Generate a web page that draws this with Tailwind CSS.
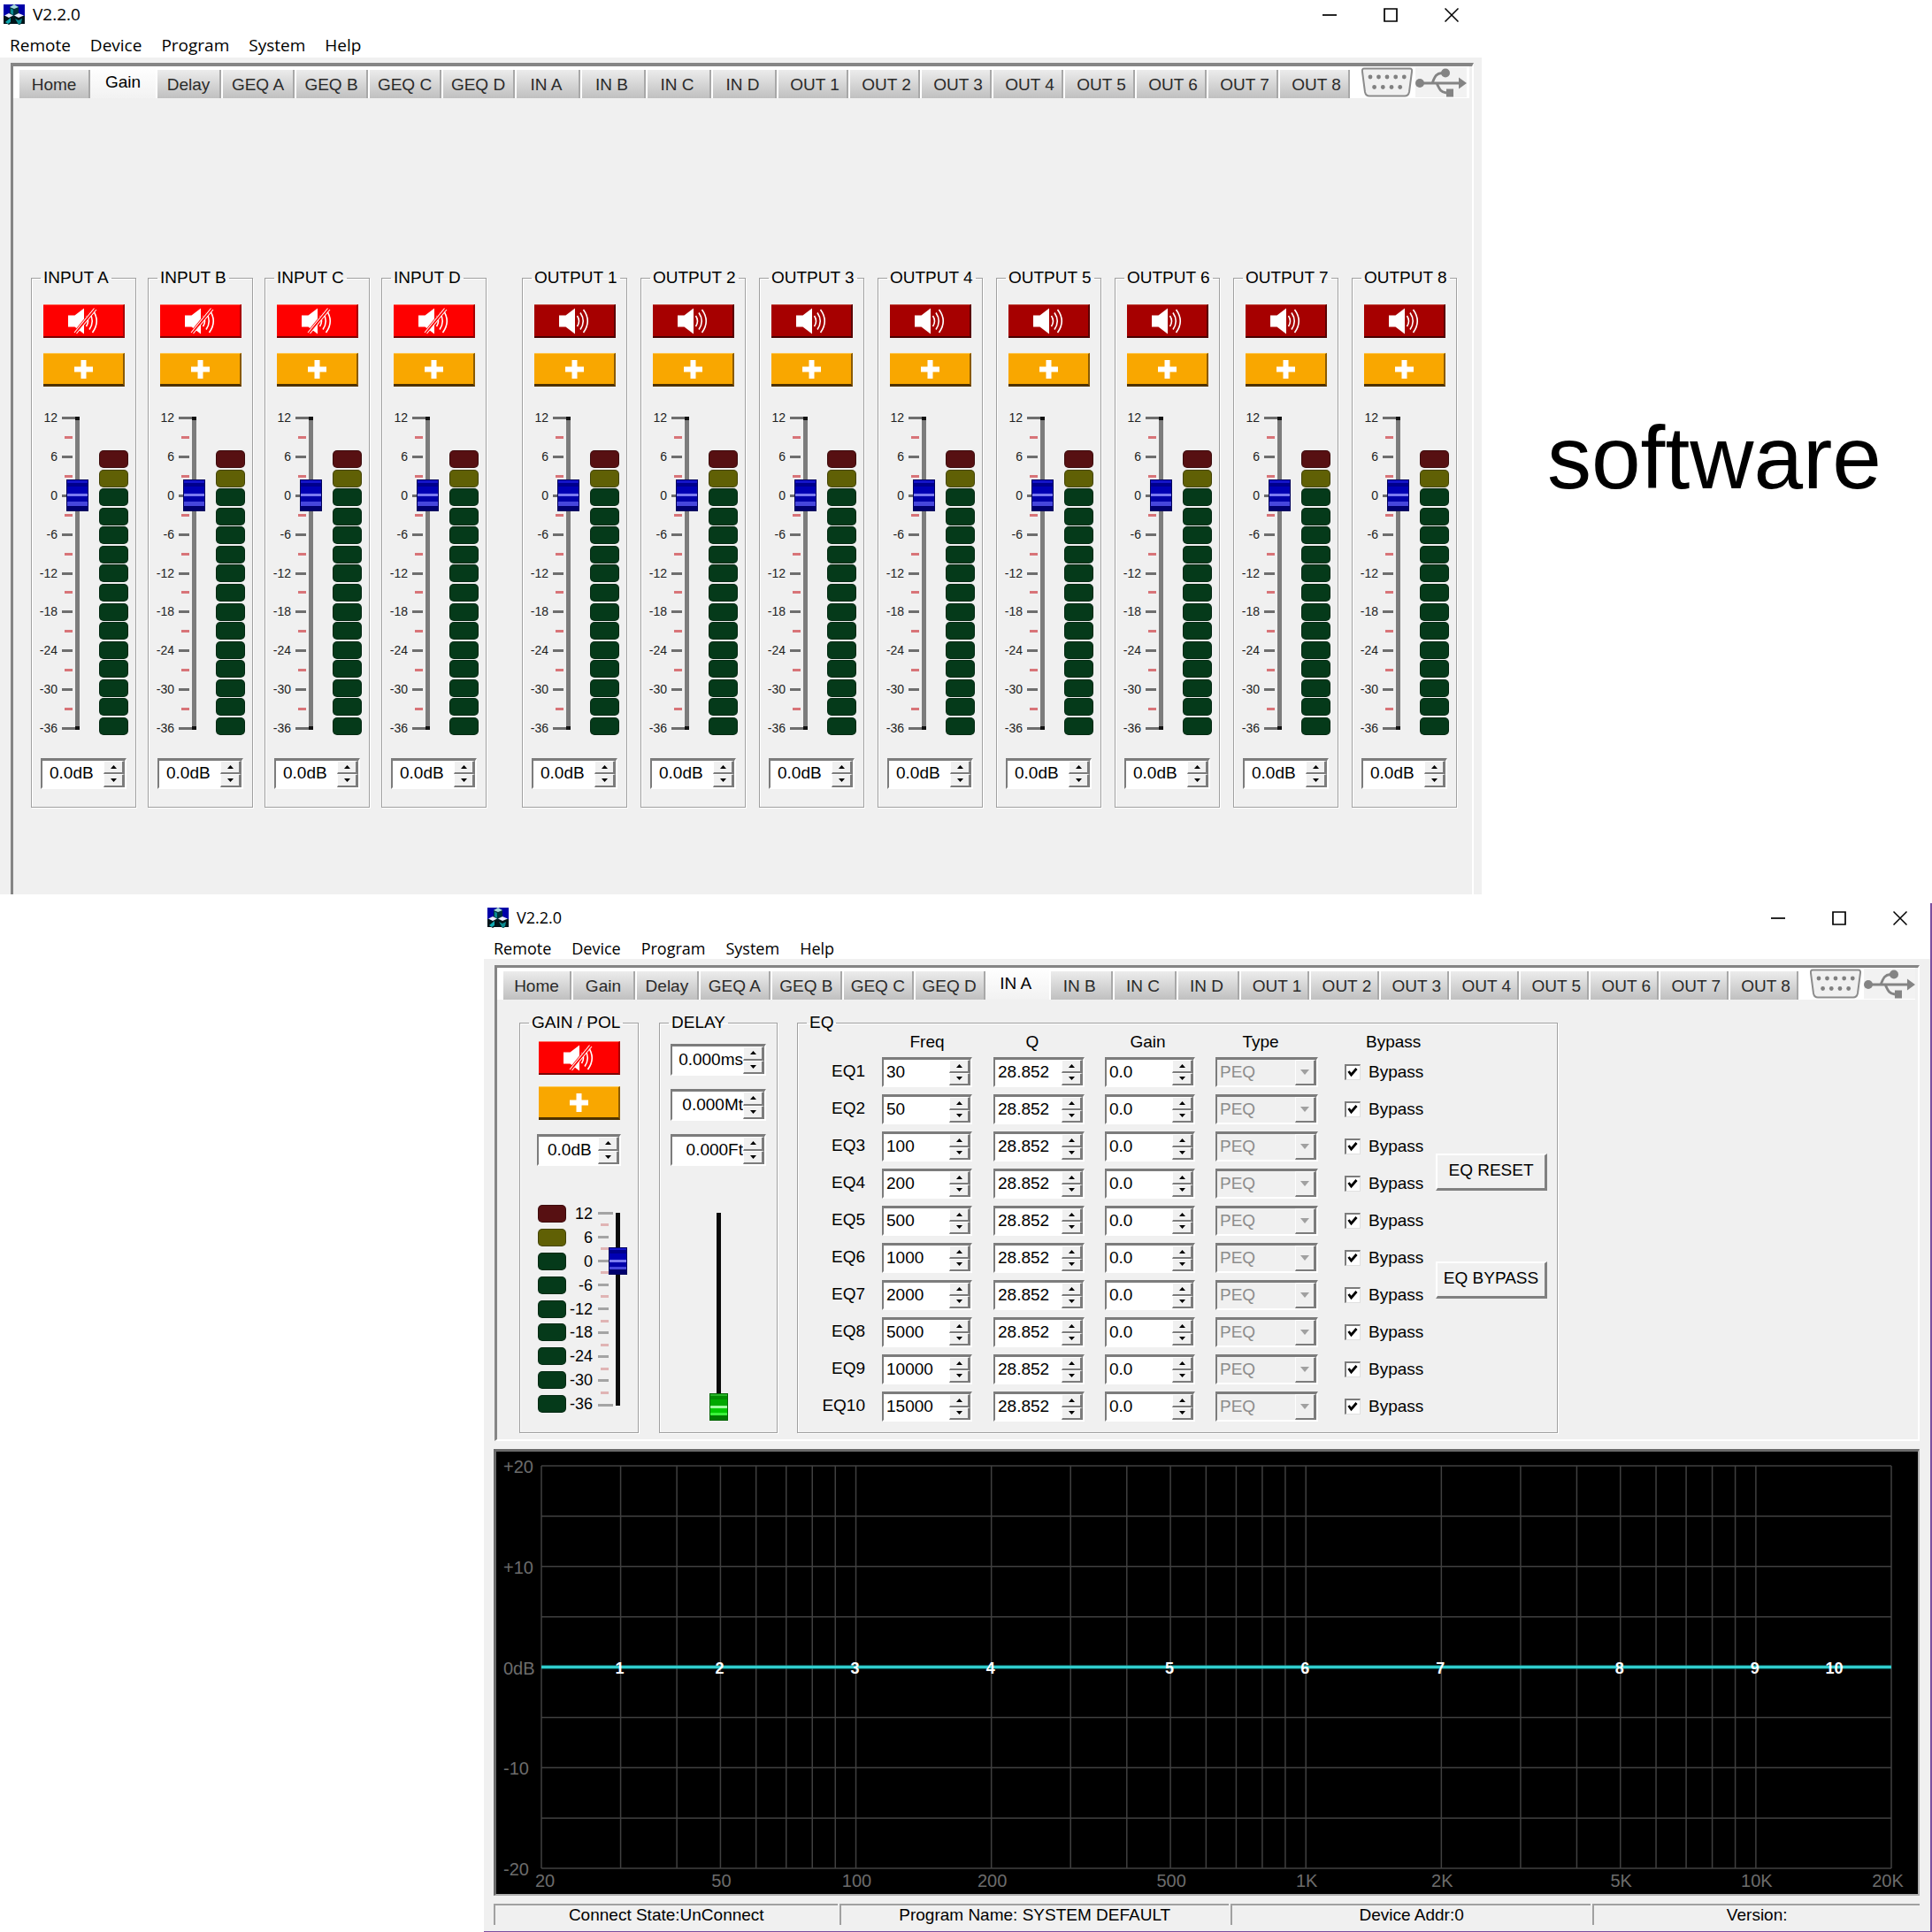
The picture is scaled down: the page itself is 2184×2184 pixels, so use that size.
<!DOCTYPE html>
<html lang="en">
<head>
  <meta charset="UTF-8" />
  <meta name="viewport" content="width=device-width, initial-scale=1.0" />
  <title>V2.2.0</title>
  <script src="https://cdn.jsdelivr.net/npm/@tailwindcss/browser@4"></script>
</head>
<body class="bg-white text-black font-['Liberation_Sans',Arial,sans-serif] text-[19px] leading-6">
  <main class="flex flex-col gap-[10px]">
    <div class="flex">
      <!-- Gain page -->
      <section class="flex-1 min-w-0 bg-[#f0f0f0]">
        <header id="gain-header" class="bg-white h-[65px] font-['Open_Sans','Noto_Sans',sans-serif] text-[19px]"></header>
        <div class="ml-3 mr-[9px] mt-[6px] border-t-4 border-l-[3px] border-r-2 border-t-[#858585] border-l-[#858585] border-r-white">
          <nav id="gain-tabs" class="flex items-end h-9 pl-[5px] mr-[3px] bg-white"></nav>
          <div class="flex gap-10 pt-[191px] pl-5 pb-[98px]">
            <div id="inputs" class="flex gap-[13px]"></div>
            <div id="outputs" class="flex gap-[15px]"></div>
          </div>
        </div>
      </section>
      <h1 class="w-[509px] pl-[74px] pt-[467px] text-[100px] leading-none">software</h1>
    </div>

    <!-- Channel page -->
    <section class="ml-[547px] bg-[#f0f0f0] border-r-2 border-b-2 border-[#7a4fa0] pb-[7px]">
      <header id="channel-header" class="bg-white h-[63px] font-['Open_Sans','Noto_Sans',sans-serif] text-lg"></header>
      <div class="mx-3 mt-[7px] border-t-[3px] border-l-[3px] border-r-2 border-b-2 border-t-[#858585] border-l-[#858585] border-r-white border-b-white">
        <nav id="channel-tabs" class="flex items-end h-9 pl-[5px] mr-[3px] bg-white"></nav>
        <div class="flex pt-[14px] pl-[25px] pb-[7px]">
          <fieldset class="w-[135px] min-w-0 border border-[#a0a0a0] shadow-[inset_1px_1px_0_white,1px_1px_0_white] pb-[22px]">
            <legend class="ml-[10px] px-[3px]">GAIN / POL</legend>
            <div id="channel-gain" class="flex flex-col items-center pt-[9px]"></div>
            <div class="flex items-center h-[235px] mt-[44px] pl-5">
              <div id="channel-leds" class="flex flex-col justify-between h-full"></div>
              <div id="channel-scale" class="flex flex-col justify-between h-full w-[30px] text-right text-lg leading-5"></div>
              <div id="channel-ticks" class="flex flex-col items-start justify-between h-[220px] w-[18px] ml-[6px]"></div>
              <input type="range" aria-label="Channel gain" min="-36" max="12" value="0"
                class="relative appearance-none [writing-mode:vertical-lr] [direction:rtl] w-[21px] h-[249px] -ml-[6px] bg-[linear-gradient(#0a0a0a,#0a0a0a)] bg-[length:5px_218px] bg-center bg-no-repeat [&::-webkit-slider-thumb]:appearance-none [&::-webkit-slider-thumb]:w-[21px] [&::-webkit-slider-thumb]:h-[31px] [&::-webkit-slider-thumb]:border [&::-webkit-slider-thumb]:border-[#00005c] [&::-webkit-slider-thumb]:bg-[linear-gradient(#1414c8_0_8%,#00008c_8%_20%,#0000b4_20%_45%,#7a7af0_45%_54%,#0000a8_54%_72%,#4646dc_72%_84%,#00006e_84%)]" />
            </div>
          </fieldset>

          <fieldset class="w-[134px] min-w-0 ml-[23px] border border-[#a0a0a0] shadow-[inset_1px_1px_0_white,1px_1px_0_white]">
            <legend class="ml-[10px] px-[3px]">DELAY</legend>
            <div id="channel-delay" class="flex flex-col items-center gap-[15px] pt-3"></div>
            <div class="flex justify-center mt-[37px]">
              <input type="range" aria-label="Channel delay" min="0" max="100" value="0"
                class="appearance-none [writing-mode:vertical-lr] [direction:rtl] w-[21px] h-[251px] bg-[linear-gradient(#0a0a0a,#0a0a0a)] bg-[length:5px_220px] bg-center bg-no-repeat [&::-webkit-slider-thumb]:appearance-none [&::-webkit-slider-thumb]:w-[21px] [&::-webkit-slider-thumb]:h-[31px] [&::-webkit-slider-thumb]:border [&::-webkit-slider-thumb]:border-[#006400] [&::-webkit-slider-thumb]:bg-[linear-gradient(#28b428_0_8%,#008c00_8%_20%,#00a800_20%_45%,#a0ffa0_45%_54%,#00c800_54%_72%,#3cf03c_72%_84%,#007800_84%)]" />
            </div>
          </fieldset>

          <fieldset class="w-[860px] min-w-0 ml-[22px] border border-[#a0a0a0] shadow-[inset_1px_1px_0_white,1px_1px_0_white]">
            <legend class="ml-[10px] px-[3px]">EQ</legend>
            <div class="flex">
              <table class="table-fixed w-[721px]">
                <thead>
                  <tr class="h-[27px] align-top leading-5">
                    <td class="w-[77px]"></td>
                    <th class="w-[144px] pl-[18px] pr-6 font-normal text-center">Freq</th>
                    <th class="w-[126px] pr-[38px] font-normal text-center">Q</th>
                    <th class="w-[125px] pr-[28px] font-normal text-center">Gain</th>
                    <th class="w-[146px] pr-[44px] font-normal text-center">Type</th>
                    <th class="w-[103px] pl-6 font-normal text-left">Bypass</th>
                  </tr>
                </thead>
                <tbody id="eq-rows"></tbody>
              </table>
              <div class="flex flex-col gap-20 pt-[136px]">
                <button class="w-[126px] h-[42px] pb-1 text-[19px] whitespace-nowrap border-t-2 border-l-2 border-r-[3px] border-b-[3px] border-t-white border-l-white border-r-[#808080] border-b-[#808080]">EQ RESET</button>
                <button class="w-[126px] h-[42px] pb-1 text-[19px] whitespace-nowrap border-t-2 border-l-2 border-r-[3px] border-b-[3px] border-t-white border-l-white border-r-[#808080] border-b-[#808080]">EQ BYPASS</button>
              </div>
            </div>
          </fieldset>
        </div>
      </div>

      <!-- Response curve -->
      <div class="ml-[11px] mr-3 mt-[9px] h-[505px] bg-black border-t-[3px] border-l-[3px] border-r-2 border-b-2 border-t-[#6a6a6a] border-l-[#6a6a6a] border-r-[#b0b0b0] border-b-[#b0b0b0] pl-[51px] pr-[30px] pt-4 pb-[29px]">
        <svg id="curve" class="w-full h-full overflow-visible text-xl" aria-label="EQ response"></svg>
      </div>

      <footer class="grid grid-cols-[390fr_442fr_409fr_371fr] gap-x-[2px] ml-[11px] mr-3 mt-[9px] text-center leading-[22px] whitespace-nowrap">
        <div class="border-t-2 border-l-2 border-[#a0a0a0]">Connect State:UnConnect</div>
        <div class="border-t-2 border-l-2 border-[#a0a0a0]">Program Name: SYSTEM DEFAULT</div>
        <div class="border-t-2 border-l-2 border-[#a0a0a0]">Device Addr:0</div>
        <div class="border-t-2 border-l-2 border-[#a0a0a0]">Version:</div>
      </footer>
    </section>
  </main>

  <script>
    const html = String.raw;
    const byId = (id) => document.getElementById(id);
    const scale = [12, 6, 0, -6, -12, -18, -24, -30, -36];

    // Title bar and menu
    function header(gap) {
      const menus = ["Remote", "Device", "Program", "System", "Help"];
      return html`
        <div class="flex justify-between h-[34px]">
          <div class="flex items-center gap-[9px] pl-1 pb-[2px]">
            <svg class="w-6 h-6" viewBox="0 0 24 24">
              <rect y="1" width="24" height="14" fill="#0000a8" />
              <path d="M0 14h24v9H0z" fill="#00141c" />
              <path d="M7 4l5-3 5 3v9l-5 2-5-2z" fill="#00303a" />
              <path d="M7 4l5-3 5 3-5 2z" fill="#a8dce0" />
              <path d="M8 5.500l3 1.500v6l-3-2z" fill="#0a8a90" />
              <path d="M1 14l5-3 5 3v7l-5 3-5-3z" fill="#001418" />
              <path d="M1 13.500l5-2.500 5 2.500-5 2.500z" fill="#eef" />
              <path d="M2 21l6-5v5l-3 2z" fill="#10a8b0" />
              <path d="M12 14l5-3 6 3v7l-5 3-6-3z" fill="#001418" />
              <path d="M12 13.500l5-2.500 6 2.500-6 2.500z" fill="#eef" />
              <path d="M13 17l4 2 4-2-1 5-3 2z" fill="#0a8a90" />
            </svg>
            <span>V2.2.0</span>
          </div>
          <div class="flex">
            <button aria-label="Minimize" class="w-[69px] flex justify-center items-center">
              <svg class="w-4 h-4" viewBox="0 0 16 16"><path d="M0 8h16" stroke="#000" stroke-width="1.700" /></svg>
            </button>
            <button aria-label="Maximize" class="w-[69px] flex justify-center items-center">
              <svg class="w-4 h-4" viewBox="0 0 16 16"><path d="M1 1h14v14H1z" fill="none" stroke="#000" stroke-width="1.700" /></svg>
            </button>
            <button aria-label="Close" class="w-[69px] flex justify-center items-center">
              <svg class="w-4 h-4" viewBox="0 0 16 16"><path d="M.5.5l15 15M15.500.5l-15 15" stroke="#000" stroke-width="1.500" /></svg>
            </button>
          </div>
        </div>
        <div class="flex ${gap} pl-[11px]">
          ${menus.map((m) => html`<button class="leading-[35px]">${m}</button>`).join("")}
        </div>
      `;
    }

    // Tabs, one width per kind of page
    function tabs(active, w) {
      const list = [
        ["Home", w.home], ["Gain", w.page], ["Delay", w.page],
        ["GEQ A", w.geq], ["GEQ B", w.geq], ["GEQ C", w.geq], ["GEQ D", w.geq],
        ["IN A", w.input], ["IN B", w.input], ["IN C", w.input], ["IN D", w.input],
      ];
      for (let i = 1; i <= 8; i++) list.push([`OUT ${i}`, w.output]);

      const buttons = list.map(([name, width]) =>
        name === active
          ? html`<button class="${width} h-9 whitespace-nowrap bg-linear-to-b from-white to-[#f2f2f2]">${name}</button>`
          : html`<button class="${width} h-8 pt-[2px] whitespace-nowrap text-[#2a2a2a] bg-linear-to-b from-[#ececec] to-[#c0c0c0] border-l-2 border-r-2 border-l-white border-r-[#a8a8a8]">${name}</button>`
      );
      return html`
        ${buttons.join("")}
        <svg class="w-[58px] h-[34px] mb-px ml-[13px]" viewBox="0 0 58 34">
          <path d="M3 1.500H55Q57.500 1.500 57 5L54 28Q53 32.500 49 32.500H9Q5 32.500 4 28L1 5Q.5 1.500 3 1.500z" fill="#f0f0f0" stroke="#8c8c8c" stroke-width="2" />
          <g fill="#808080">
            <circle cx="10" cy="11" r="2.400" /><circle cx="19.500" cy="11" r="2.400" /><circle cx="29" cy="11" r="2.400" />
            <circle cx="38.700" cy="11" r="2.400" /><circle cx="48.300" cy="11" r="2.400" />
            <circle cx="14.600" cy="22.500" r="2.400" /><circle cx="24.300" cy="22.500" r="2.400" />
            <circle cx="34" cy="22.500" r="2.400" /><circle cx="43.700" cy="22.500" r="2.400" />
          </g>
        </svg>
        <svg class="w-[58px] h-[34px] mb-px ml-[3px] bg-[#f2f2f2]" viewBox="0 0 58 34">
          <g fill="#848484" stroke="none">
            <circle cx="5" cy="18" r="5" /><circle cx="34" cy="6.500" r="5" />
            <path d="M35 24.500h8v9h-8zM49 11.500l9 6.500-9 6.500z" />
          </g>
          <path d="M5 18h46M19 18c3-7 4-11 11-11.500M24 18c3 6 4 10.500 11 11" fill="none" stroke="#848484" stroke-width="2.800" />
        </svg>
      `;
    }

    function muteButton(muted) {
      const wave = html`
        <path d="M20.500 9q4 6 0 12M24 5.500q6.500 9.500 0 19M27.500 2q9.500 13 0 26" fill="none" stroke="#fff" stroke-width="1.600" />`;
      const slash = html`
        <path d="M8 28L30 1" stroke="#f00" stroke-width="4" />
        <path d="M7 28L29.500 .5M9.500 29L32 2" stroke="#fff" stroke-width="1.100" />`;
      const icon = html`
        <svg class="w-[34px] h-[30px]" viewBox="0 0 34 30">
          <path d="M0 8.500h7.500L18 .5v29L7.500 21.500H0z" fill="#fff" />${wave}${muted ? slash : ""}
        </svg>`;
      return muted
        ? html`<button aria-label="Unmute" aria-pressed="true" class="w-[92px] h-[38px] shrink-0 pt-px flex justify-center items-center bg-[#fe0000] border-t border-t-[#ff6a5a] border-r-2 border-b-2 border-r-[#a80000] border-b-[#7c0000]">${icon}</button>`
        : html`<button aria-label="Mute" aria-pressed="false" class="w-[92px] h-[38px] shrink-0 pt-px flex justify-center items-center bg-[#a60000] border-t border-t-[#c04a40] border-r-2 border-b-2 border-r-[#5a0000] border-b-[#480000]">${icon}</button>`;
    }

    function polarityButton() {
      return html`
        <button aria-label="Polarity" class="w-[92px] h-[38px] shrink-0 pl-[2px] flex justify-center items-center bg-[#f9a700] border-t border-t-[#ffc850] border-r-2 border-b-[3px] border-r-[#8a5a00] border-b-[#4e3200]">
          <svg class="w-[21px] h-[21px]" viewBox="0 0 21 21"><path d="M7.500 0h6v7.500H21v6h-7.500V21h-6v-7.500H0v-6h7.500z" fill="#fff" /></svg>
        </button>`;
    }

    // Spin box; size holds width, height and text classes
    function spin(label, value, size) {
      const step = (name, d) => html`
        <button aria-label="${label} ${name}" class="flex-1 flex justify-center items-center bg-[#f0f0f0] border-t border-l border-r-[3px] border-b-2 border-t-white border-l-white border-r-[#7c7c7c] border-b-[#7c7c7c]">
          <svg class="w-[7px] h-1" viewBox="0 0 7 4"><path d="${d}" /></svg>
        </button>`;
      return html`
        <div class="${size} flex bg-white border-t-[3px] border-l-2 border-r-2 border-b-2 border-t-[#7c7c7c] border-l-[#7c7c7c] border-r-white border-b-white">
          <input type="text" aria-label="${label}" value="${value}" class="flex-1 min-w-0 h-full pb-[2px] outline-none" />
          <div class="flex flex-col w-6 shrink-0">${step("up", "M0 4L3.500 0 7 4z")}${step("down", "M0 0L3.500 4 7 0z")}</div>
        </div>`;
    }

    function leds(count, width) {
      return Array.from({ length: count }, (_, i) => {
        const color = i === 0 ? "bg-[#571012]" : i === 1 ? "bg-[#606005]" : "bg-[#053a1a]";
        return html`<div class="${width} ${color} h-5 rounded-[5px] border border-black/30"></div>`;
      }).join("");
    }

    function ticks(major, minor) {
      return Array.from({ length: 17 }, (_, i) => {
        if (i % 2) return html`<div class="w-[9px] h-[3px] ml-[3px] ${minor}"></div>`;
        const width = i === 0 || i === 16 ? "w-[17px]" : "w-3";
        return html`<div class="${width} h-[3px] ${major}"></div>`;
      }).join("");
    }

    function strip(name, muted) {
      return html`
        <fieldset class="w-[119px] min-w-0 flex flex-col border border-[#a0a0a0] shadow-[inset_1px_1px_0_white,1px_1px_0_white] pb-5">
          <legend class="ml-[10px] px-[3px] whitespace-nowrap">${name}</legend>
          <div class="flex flex-col items-center gap-[17px] pt-[18px]">${muteButton(muted)}${polarityButton()}</div>
          <div class="flex items-center h-[366px] mt-7">
            <div class="flex flex-col justify-between h-full w-[29px] text-right text-sm leading-[15px] text-[#222]">
              ${scale.map((n) => html`<span>${n}</span>`).join("")}
            </div>
            <div class="flex flex-col items-start justify-between h-[354px] w-[17px] ml-[5px]">${ticks("bg-[#6e6e6e]", "bg-[#d87478]")}</div>
            <input type="range" aria-label="${name} gain" min="-36" max="12" value="0"
              class="relative shrink-0 appearance-none [writing-mode:vertical-lr] [direction:rtl] w-[25px] h-[390px] -ml-3 bg-[linear-gradient(#111_0_1%,#7c7c7c_1%_99%,#111_99%)] bg-[length:5px_354px] bg-center bg-no-repeat [&::-webkit-slider-thumb]:appearance-none [&::-webkit-slider-thumb]:w-[25px] [&::-webkit-slider-thumb]:h-[36px] [&::-webkit-slider-thumb]:border [&::-webkit-slider-thumb]:border-[#00005c] [&::-webkit-slider-thumb]:bg-[linear-gradient(#1414c8_0_8%,#00008c_8%_20%,#0000b4_20%_45%,#7a7af0_45%_54%,#0000a8_54%_72%,#4646dc_72%_84%,#00006e_84%)]" />
            <div class="flex flex-col justify-between h-[322px] ml-3 self-end">${leds(15, "w-[33px]")}</div>
          </div>
          <div class="flex justify-center mt-[26px]">${spin(name + " level", "0.0dB", "w-[97px] h-[35px] pl-2")}</div>
        </fieldset>`;
    }

    function eqRow(n, freq) {
      return html`
        <tr class="h-[42px] align-top">
          <td class="pr-px text-right leading-8">EQ${n}</td>
          <td class="pl-[18px]">${spin("EQ" + n + " frequency", freq, "w-[102px] h-[34px] pl-[3px]")}</td>
          <td>${spin("EQ" + n + " Q", "28.852", "w-[103px] h-[34px] pl-[3px]")}</td>
          <td>${spin("EQ" + n + " gain", "0.0", "w-[102px] h-[34px] pl-[3px]")}</td>
          <td>
            <div class="grid w-[116px] h-[34px] border-t-[3px] border-l-2 border-r-2 border-b-2 border-t-[#7c7c7c] border-l-[#7c7c7c] border-r-white border-b-white">
              <select disabled aria-label="EQ${n} type" class="[grid-area:1/1] appearance-none pl-[3px] pb-[2px] text-[#8c8c8c] opacity-100">
                <option>PEQ</option>
              </select>
              <div class="[grid-area:1/1] justify-self-end w-6 flex justify-center items-center border-t border-l border-r-[3px] border-b-2 border-t-white border-l-white border-r-[#7c7c7c] border-b-[#7c7c7c] pointer-events-none">
                <svg class="w-[10px] h-[6px]" viewBox="0 0 10 6"><path d="M0 0h10L5 6z" fill="#a0a0a0" /></svg>
              </div>
            </div>
          </td>
          <td>
            <label class="flex items-center gap-[9px] h-[34px]">
              <span class="grid place-items-center">
                <input type="checkbox" checked class="peer [grid-area:1/1] appearance-none w-[18px] h-[18px] bg-white border-t-2 border-l-2 border-r border-b border-t-[#7c7c7c] border-l-[#7c7c7c] border-r-[#e0e0e0] border-b-[#e0e0e0]" />
                <svg class="[grid-area:1/1] w-3 h-3 hidden peer-checked:block pointer-events-none" viewBox="0 0 12 12"><path d="M1.500 5l3 4L10.500 2" fill="none" stroke="#000" stroke-width="2.800" /></svg>
              </span>
              <span>Bypass</span>
            </label>
          </td>
        </tr>`;
    }

    // Log frequency axis 20 Hz - 20 kHz, linear gain axis +20 - -20 dB
    const freqX = (f) => ((Math.log10(f / 20) / 3) * 100).toFixed(3) + "%";
    const gainY = (g) => (50 - g * 2.5).toFixed(3) + "%";

    function drawCurve(points) {
      const grid = [];
      for (const decade of [10, 100, 1000, 10000]) {
        for (let n = 1; n < 10; n++) {
          const f = decade * n;
          if (f < 20 || f > 20000) continue;
          grid.push(html`<line x1="${freqX(f)}" x2="${freqX(f)}" y1="0" y2="100%" />`);
        }
      }
      for (let g = -20; g <= 20; g += 5) {
        grid.push(html`<line x1="0" x2="100%" y1="${gainY(g)}" y2="${gainY(g)}" />`);
      }
      const freqs = [[20, "20"], [50, "50"], [100, "100"], [200, "200"], [500, "500"], [1000, "1K"], [2000, "2K"], [5000, "5K"], [10000, "10K"], [20000, "20K"]];
      const gains = [[20, "+20"], [10, "+10"], [0, "0dB"], [-10, "-10"], [-20, "-20"]];
      // the outer labels are pulled inside the grid
      const shift = (f) => (f === 20 ? 4 : f === 20000 ? -4 : 1);
      return html`
        <g stroke="#404040" stroke-width="1.500">${grid.join("")}</g>
        <g fill="#6c6c6c">
          ${freqs.map(([f, t]) => html`<text x="${freqX(f)}" y="100%" dx="${shift(f)}" dy="21" text-anchor="middle">${t}</text>`).join("")}
          ${gains.map(([g, t]) => html`<text x="0" y="${gainY(g)}" dx="-43" dy="8">${t}</text>`).join("")}
        </g>
        <line x1="0" x2="100%" y1="50%" y2="50%" stroke="#14a0a0" stroke-width="4" />
        <line x1="0" x2="100%" y1="50%" y2="50%" stroke="#3cdcdc" stroke-width="2" />
        <g fill="#fff" class="font-bold text-lg">
          ${points.map((f, i) => html`<text x="${freqX(f)}" y="50%" dx="-1" dy="7" text-anchor="middle">${i + 1}</text>`).join("")}
        </g>`;
    }

    const eqFreqs = [30, 50, 100, 200, 500, 1000, 2000, 5000, 10000, 15000];

    byId("gain-header").innerHTML = header("gap-[22px]");
    byId("channel-header").innerHTML = header("gap-[23px]");
    byId("gain-tabs").innerHTML = tabs("Gain", {
      home: "w-[82px]", page: "w-[74px]", geq: "w-[83px]", input: "w-[74px] pr-[3px]", output: "w-[81px] pl-[5px]",
    });
    byId("channel-tabs").innerHTML = tabs("IN A", {
      home: "w-[79px]", page: "w-[72px]", geq: "w-[81px]", input: "w-[72px] pr-[3px]", output: "w-[79px] pl-[5px]",
    });
    byId("inputs").innerHTML = ["A", "B", "C", "D"].map((c) => strip("INPUT " + c, true)).join("");
    byId("outputs").innerHTML = [1, 2, 3, 4, 5, 6, 7, 8].map((c) => strip("OUTPUT " + c, false)).join("");

    byId("channel-gain").innerHTML = html`
      ${muteButton(true)}
      <div class="mt-[13px] mb-4 flex">${polarityButton()}</div>
      ${spin("Channel level", "0.0dB", "w-[95px] h-9 pl-[10px]")}`;
    byId("channel-leds").innerHTML = leds(9, "w-8");
    byId("channel-scale").innerHTML = scale.map((n) => html`<span>${n}</span>`).join("");
    byId("channel-ticks").innerHTML = ticks("bg-[#a4a4a4]", "bg-[#e0b4b4]");
    byId("channel-delay").innerHTML = ["0.000ms", "0.000Mt", "0.000Ft"]
      .map((v) => spin("Delay " + v.slice(5), v, "w-[108px] h-9 [&>input]:text-right"))
      .join("");
    byId("eq-rows").innerHTML = eqFreqs.map((f, i) => eqRow(i + 1, f)).join("");
    byId("curve").innerHTML = drawCurve(eqFreqs);
  </script>
</body>
</html>
